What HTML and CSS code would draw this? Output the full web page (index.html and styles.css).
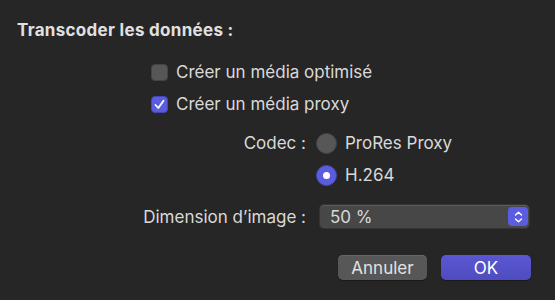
FILE: index.html
```html
<!DOCTYPE html>
<html lang="fr">
<head>
  <meta charset="UTF-8" />
  <title>Transcoder les données</title>
  <link rel="stylesheet" href="styles.css">
</head>
<body>
  <div class="dialog">
    <h3 class="title">Transcoder les données :</h3>

    <div class="form">
      <label class="check-row row-first">
        <span class="checkbox"></span>
        <span>Créer un média optimisé</span>
      </label>
      <label class="check-row row-second">
        <span class="checkbox checked">
          <svg width="13" height="13" viewBox="0 0 13 13"><path d="M2.5 7 L5.3 10 L10.5 2.8" fill="none" stroke="white" stroke-width="1.8" stroke-linecap="round" stroke-linejoin="round"/></svg>
        </span>
        <span>Créer un média proxy</span>
      </label>

      <div class="label row-codec">Codec :</div>
      <label class="radio-row row-codec">
        <span class="radio"></span>
        <span>ProRes Proxy</span>
      </label>
      <label class="radio-row row-h264 ctrl">
        <span class="radio selected"></span>
        <span>H.264</span>
      </label>

      <div class="label row-dim">Dimension d’image :</div>
      <div class="select row-dim">
        <span>50 %</span>
        <span class="stepper">
          <svg width="11" height="14" viewBox="0 0 11 14"><path d="M2.5 5 L5.5 2.2 L8.5 5 M2.5 9 L5.5 11.8 L8.5 9" fill="none" stroke="white" stroke-width="1.4" stroke-linecap="round" stroke-linejoin="round"/></svg>
        </span>
      </div>
    </div>

    <div class="actions">
      <button class="btn cancel">Annuler</button>
      <button class="btn ok">OK</button>
    </div>
  </div>
</body>
</html>
```

FILE: styles.css
```css
body {
  margin: 0;
  background: #262626;
  font-family: Inter, "Noto Sans", sans-serif;
  color: #d9d9d9;
  overflow: hidden;
}

.dialog {
  width: 555px;
  height: 300px;
  box-sizing: border-box;
  padding-top: 20px;
}

.title {
  margin: 0 0 0 17px;
  font-size: 17px;
  font-weight: 700;
  letter-spacing: 0.3px;
  line-height: 20px;
  color: #e0e0e0;
}

.form {
  display: grid;
  grid-template-columns: 306px 1fr;
  column-gap: 10px;
  margin-top: 20px;
  font-size: 17px;
}

.check-row {
  grid-column: 1 / -1;
  display: flex;
  align-items: center;
  gap: 8px;
  padding-left: 151px;
  height: 24px;
}

.row-second {
  margin-top: 8px;
}

.checkbox {
  width: 17px;
  height: 17px;
  box-sizing: border-box;
  border-radius: 4px;
  background: #575757;
  border: 1px solid #444;
  display: flex;
  align-items: center;
  justify-content: center;
}

.checkbox.checked {
  background: #5c5ce0;
  border-color: #4646b8;
}

.label {
  grid-column: 1;
  text-align: right;
  display: flex;
  align-items: center;
  justify-content: flex-end;
}

.row-codec {
  margin-top: 15px;
  height: 24px;
}

.radio-row {
  grid-column: 2;
  display: flex;
  align-items: center;
  gap: 8px;
}

.row-h264 {
  margin-top: 8px;
  height: 24px;
}

.radio {
  width: 21px;
  height: 21px;
  box-sizing: border-box;
  border-radius: 50%;
  background: #575757;
  border: 1px solid #444;
  display: flex;
  align-items: center;
  justify-content: center;
}

.radio.selected {
  background: #5c5ce0;
  border-color: #4646b8;
}

.radio.selected::after {
  content: "";
  width: 7px;
  height: 7px;
  border-radius: 50%;
  background: white;
}

.row-dim {
  margin-top: 17px;
  height: 25px;
}

.select {
  grid-column: 2;
  width: 211px;
  margin-left: 3px;
  box-sizing: border-box;
  border-radius: 5px;
  background: #474747;
  border: 1px solid #353535;
  box-shadow: inset 0 1px 0 #5a5a5a;
  display: flex;
  align-items: center;
  justify-content: space-between;
  padding: 0 1px 0 10px;
}

.stepper {
  width: 20px;
  height: 19px;
  border-radius: 4px;
  background: #5c5ce0;
  display: flex;
  align-items: center;
  justify-content: center;
}

.actions {
  display: flex;
  justify-content: flex-end;
  gap: 14px;
  padding-right: 24px;
  margin-top: 26px;
}

.btn {
  height: 25px;
  border: none;
  border-radius: 5px;
  font-family: inherit;
  font-size: 17px;
  color: #e2e2e2;
  padding: 0;
}

.cancel {
  width: 89px;
  background: #575757;
  box-shadow: inset 0 1px 0 #666, 0 1px 1px #1a1a1a;
}

.ok {
  width: 90px;
  background: linear-gradient(#5a57d2, #4f4cc0);
  box-shadow: 0 1px 1px #1a1a1a;
  color: white;
}
```
